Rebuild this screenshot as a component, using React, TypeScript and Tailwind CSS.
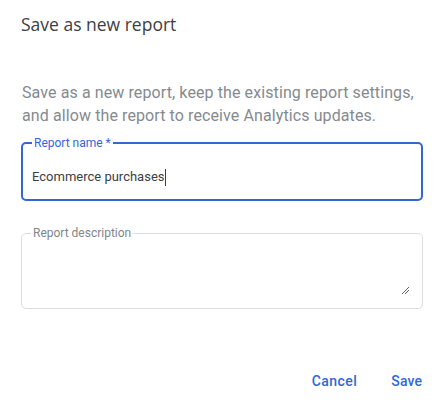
import React from 'react';

const App = () => {
  return (
    <div className="w-[444px] h-[405px] bg-white flex flex-col px-[21px] font-['Roboto',sans-serif]">
      <h1 className="mt-[12px] text-[17.5px] leading-[24px] text-[#3c4043] font-['Open_Sans','Roboto',sans-serif]">
        Save as new report
      </h1>

      <p className="mt-[45px] text-[16px] leading-[23px] text-[#858a8f] pl-[1px] tracking-[0.1px]">
        Save as a new report, keep the existing report settings, and allow the report to receive Analytics updates.
      </p>

      <fieldset className="mt-[9px] h-[65px] border-2 border-[#3367d6] rounded-[5px] px-[9px]">
        <legend className="px-[2px] text-[12px] leading-[14px] text-[#3367d6]">Report name *</legend>
        <div className="mt-[17px] flex items-center text-[13px] leading-[20px] text-[#3c4043]">
          Ecommerce purchases
          <span className="w-px h-[17px] bg-[#3c4043]" />
        </div>
      </fieldset>

      <fieldset className="mt-[25px] h-[83px] border border-[#dadce0] rounded-[5px] px-[9px]">
        <legend className="px-[2px] text-[12px] leading-[14px] text-[#80868b]">Report description</legend>
        <div className="flex justify-end pt-[46px] mr-[3px]">
          <svg width="9" height="9" viewBox="0 0 9 9">
            <path d="M1 8 L8 1 M4 8 L8 4" stroke="#5f6368" strokeWidth="1" />
          </svg>
        </div>
      </fieldset>

      <div className="mt-auto mb-[16px] flex justify-end gap-[34px] pr-[1px]">
        <button className="text-[14px] leading-[16px] font-medium text-[#3367d6] tracking-[0.45px]">Cancel</button>
        <button className="text-[14px] leading-[16px] font-medium text-[#3367d6] tracking-[0.1px]">Save</button>
      </div>
    </div>
  );
};

export default App;
